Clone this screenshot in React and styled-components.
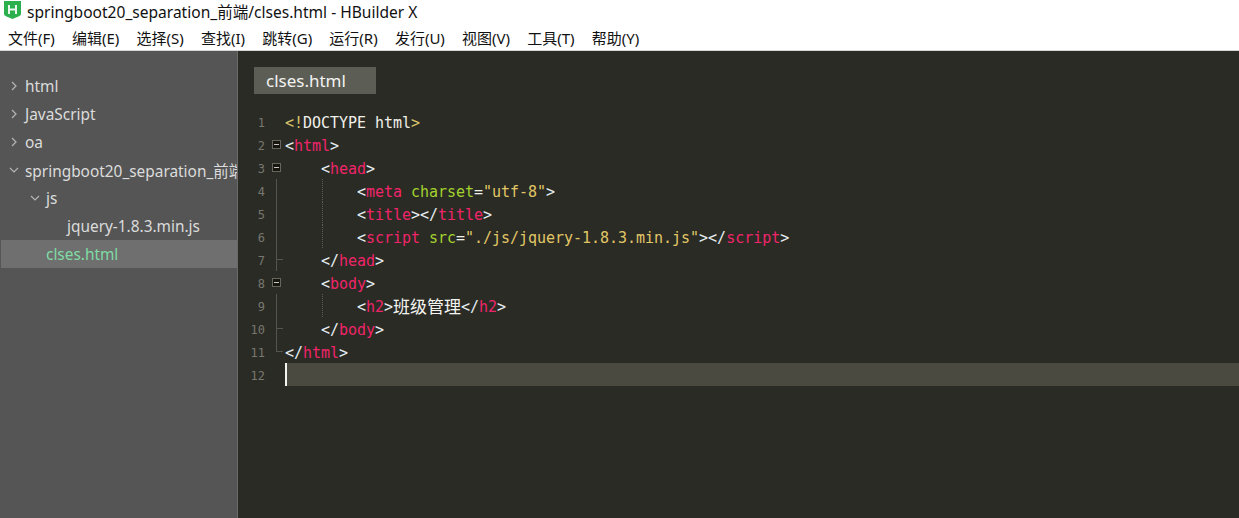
import React from "react";
import styled, { createGlobalStyle } from "styled-components";

const uiFont = `"Noto Sans", "Noto Sans CJK SC", sans-serif`;
const monoFont = `"DejaVu Sans Mono", "Noto Sans CJK SC", monospace`;

const GlobalStyle = createGlobalStyle`
  html, body {
    margin: 0;
    padding: 0;
    height: 100%;
    overflow: hidden;
    background: #fff;
  }
  #root {
    height: 100%;
  }
`;

const MENU = ["文件(F)", "编辑(E)", "选择(S)", "查找(I)", "跳转(G)", "运行(R)", "发行(U)", "视图(V)", "工具(T)", "帮助(Y)"];

const TREE = [
  { label: "html", depth: 0, arrow: "right" },
  { label: "JavaScript", depth: 0, arrow: "right" },
  { label: "oa", depth: 0, arrow: "right" },
  { label: "springboot20_separation_前端", depth: 0, arrow: "down" },
  { label: "js", depth: 1, arrow: "down" },
  { label: "jquery-1.8.3.min.js", depth: 2 },
  { label: "clses.html", depth: 1, active: true },
];

// t = tag, b = bracket, y = doctype bracket, w = plain, a = attribute, s = string
const CODE = [
  { fold: "none", parts: [["y", "<!"], ["w", "DOCTYPE html"], ["y", ">"]] },
  { fold: "box", parts: [["b", "<"], ["t", "html"], ["b", ">"]] },
  { fold: "box", indent: 1, parts: [["b", "<"], ["t", "head"], ["b", ">"]] },
  { fold: "line", indent: 2, guide: true, parts: [["b", "<"], ["t", "meta"], ["w", " "], ["a", "charset"], ["w", "="], ["s", '"utf-8"'], ["b", ">"]] },
  { fold: "line", indent: 2, guide: true, parts: [["b", "<"], ["t", "title"], ["b", "></"], ["t", "title"], ["b", ">"]] },
  { fold: "line", indent: 2, guide: true, parts: [["b", "<"], ["t", "script"], ["w", " "], ["a", "src"], ["w", "="], ["s", '"./js/jquery-1.8.3.min.js"'], ["b", "></"], ["t", "script"], ["b", ">"]] },
  { fold: "tick", indent: 1, parts: [["b", "</"], ["t", "head"], ["b", ">"]] },
  { fold: "box", indent: 1, parts: [["b", "<"], ["t", "body"], ["b", ">"]] },
  { fold: "line", indent: 2, guide: true, parts: [["b", "<"], ["t", "h2"], ["b", ">"], ["c", "班级管理"], ["b", "</"], ["t", "h2"], ["b", ">"]] },
  { fold: "tick", indent: 1, parts: [["b", "</"], ["t", "body"], ["b", ">"]] },
  { fold: "end", parts: [["b", "</"], ["t", "html"], ["b", ">"]] },
  { fold: "none", current: true, parts: [] },
];

const TOKEN_COLORS = {
  t: "#f0246a",
  b: "#e6eef2",
  y: "#d9c46a",
  w: "#f0f0ea",
  a: "#a4d22e",
  s: "#e2c766",
  c: "#f4f4f0",
};

function Arrow({ dir }) {
  return (
    <ArrowIcon width="10" height="10" viewBox="0 0 10 10">
      {dir === "down" ? (
        <path d="M1 3 L5 7 L9 3" fill="none" stroke="#b4b4b4" strokeWidth="1.2" />
      ) : (
        <path d="M3 1 L7 5 L3 9" fill="none" stroke="#b4b4b4" strokeWidth="1.2" />
      )}
    </ArrowIcon>
  );
}

function Logo() {
  return (
    <LogoIcon width="17" height="18" viewBox="0 0 17 18">
      <path d="M0 0 H17 V13 Q17 14.5 15 15.2 L8.5 18 L2 15.2 Q0 14.5 0 13 Z" fill="#2cb04e" />
      <path d="M5 4 V13 M12 4 V13 M5 8.5 H12" fill="none" stroke="#e9f7ec" strokeWidth="2" />
    </LogoIcon>
  );
}

export default function App() {
  return (
    <>
      <GlobalStyle />
      <Page>
        <TitleBar>
          <Logo />
          <TitleText>springboot20_separation_前端/clses.html - HBuilder X</TitleText>
        </TitleBar>
        <MenuBar>
          {MENU.map((m) => (
            <MenuItem key={m}>{m}</MenuItem>
          ))}
        </MenuBar>
        <Main>
          <Sidebar>
            {TREE.map((n) => (
              <TreeRow key={n.label} $active={n.active} $depth={n.depth}>
                <ArrowSlot>{n.arrow && <Arrow dir={n.arrow} />}</ArrowSlot>
                <TreeLabel $active={n.active}>{n.label}</TreeLabel>
              </TreeRow>
            ))}
          </Sidebar>
          <Editor>
            <TabBar>
              <Tab>clses.html</Tab>
            </TabBar>
            <Code>
              {CODE.map((line, i) => (
                <Line key={i}>
                  <LineNumber>{i + 1}</LineNumber>
                  <FoldCell $kind={line.fold}>{line.fold === "box" && <FoldBox />}</FoldCell>
                  <CodeText $current={line.current}>
                    {line.current && <Caret />}
                    {line.guide && <Guide />}
                    <Indent $level={line.indent || 0} />
                    {line.parts.map(([type, text], j) => (
                      <Token key={j} $type={type}>
                        {text}
                      </Token>
                    ))}
                  </CodeText>
                </Line>
              ))}
            </Code>
          </Editor>
        </Main>
      </Page>
    </>
  );
}

const Page = styled.div`
  height: 100%;
  display: flex;
  flex-direction: column;
`;
const TitleBar = styled.div`
  height: 24px;
  padding: 0 0 2px 4px;
  box-sizing: border-box;
  display: flex;
  align-items: center;
  gap: 6px;
  background: #fff;
`;
const LogoIcon = styled.svg`
  flex: none;
  align-self: flex-start;
  margin-top: 1px;
`;
const TitleText = styled.span`
  font: 15.55px ${uiFont};
  color: #111;
  white-space: nowrap;
`;
const MenuBar = styled.div`
  height: 27px;
  padding-left: 8px;
  box-sizing: border-box;
  display: flex;
  align-items: center;
  gap: 17.2px;
  background: #fff;
  border-bottom: 1px solid #d6d6d6;
`;
const MenuItem = styled.span`
  font: 15px ${uiFont};
  color: #111;
  white-space: nowrap;
`;
const Main = styled.div`
  flex: 1;
  display: flex;
  min-height: 0;
`;
const Sidebar = styled.div`
  width: 238px;
  flex: none;
  padding: 21px 0 0 1px;
  box-sizing: border-box;
  overflow: hidden;
  background: #555555;
  border-right: 1px solid #6a6a6a;
`;
const TreeRow = styled.div`
  height: 28px;
  display: flex;
  align-items: center;
  padding-left: ${(p) => 8 + p.$depth * 21}px;
  background: ${(p) => (p.$active ? "#6f6f6f" : "transparent")};
`;
const ArrowSlot = styled.span`
  width: 16px;
  flex: none;
  display: flex;
  align-items: center;
`;
const ArrowIcon = styled.svg`
  display: block;
`;
const TreeLabel = styled.span`
  font: 15.4px ${uiFont};
  color: ${(p) => (p.$active ? "#7fdca4" : "#dcdcdc")};
  white-space: nowrap;
`;
const Editor = styled.div`
  flex: 1;
  min-width: 0;
  background: #2a2b25;
  display: flex;
  flex-direction: column;
`;
const TabBar = styled.div`
  padding: 16px 0 0 16px;
  height: 43px;
  box-sizing: border-box;
  display: flex;
  flex: none;
`;
const Tab = styled.div`
  width: 122px;
  height: 27px;
  padding-left: 12px;
  box-sizing: border-box;
  display: flex;
  align-items: center;
  background: #5c5d54;
  color: #f2f2f2;
  font: 17px ${uiFont};
`;
const Code = styled.div`
  padding-top: 16px;
`;
const Line = styled.div`
  height: 23px;
  display: flex;
`;
const LineNumber = styled.div`
  width: 27px;
  flex: none;
  text-align: right;
  font: 12px/27px ${monoFont};
  color: #77776f;
`;
const foldStyles = {
  none: "",
  box: "",
  line: "background: linear-gradient(#55554f, #55554f) 11px 0 / 1px 100% no-repeat;",
  tick: `background:
    linear-gradient(#55554f, #55554f) 11px 0 / 1px 100% no-repeat,
    linear-gradient(#55554f, #55554f) 11px 11px / 7px 1px no-repeat;`,
  end: `background:
    linear-gradient(#55554f, #55554f) 11px 0 / 1px 12px no-repeat,
    linear-gradient(#55554f, #55554f) 11px 11px / 7px 1px no-repeat;`,
};
const FoldCell = styled.div`
  width: 20px;
  flex: none;
  display: flex;
  align-items: center;
  ${(p) => foldStyles[p.$kind]}
`;
const FoldBox = styled.span`
  width: 9px;
  height: 9px;
  margin-left: 7px;
  box-sizing: border-box;
  border: 1px solid #66665f;
  background: linear-gradient(#c8c8c8, #c8c8c8) center / 5px 1px no-repeat, #16160f;
`;
const CodeText = styled.div`
  position: relative;
  flex: 1;
  display: flex;
  align-items: flex-start;
  white-space: pre;
  font: 15px/27px ${monoFont};
  background: ${(p) => (p.$current ? "#4a4a40" : "transparent")};
`;
const Caret = styled.span`
  position: absolute;
  left: 0;
  top: 0;
  bottom: 0;
  width: 2px;
  background: #f4f4f0;
`;
const Guide = styled.span`
  position: absolute;
  left: 37px;
  top: 0;
  bottom: 0;
  border-left: 1px dotted #5c5c55;
`;
const Indent = styled.span`
  flex: none;
  width: ${(p) => p.$level * 36}px;
`;
const Token = styled.span`
  color: ${(p) => TOKEN_COLORS[p.$type]};
  ${(p) => (p.$type === "c" ? `font-size: 17px;` : `letter-spacing: -0.03px;`)}
`;
